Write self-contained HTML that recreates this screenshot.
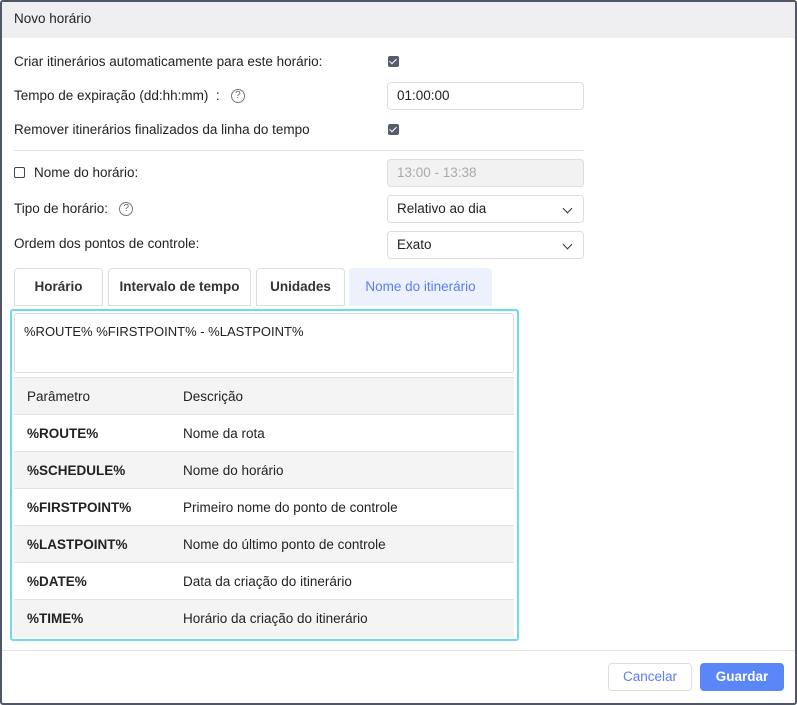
<!DOCTYPE html>
<html><head><meta charset="utf-8"><style>
*{box-sizing:border-box;margin:0;padding:0}
body{width:797px;height:705px;background:#fff;font-family:"Liberation Sans",sans-serif;font-size:13.5px;color:#222;position:relative;overflow:hidden}
.frame{position:absolute;left:0;top:0;width:797px;height:705px;border:2px solid #4f5666;border-radius:3px}
.hdr{position:absolute;left:2px;top:2px;width:793px;height:36px;background:#efeff1}
.a{position:absolute;white-space:nowrap}
.cb{position:absolute;width:11px;height:11px;background:#555c6b;border-radius:2px}
.cb::after{content:"";position:absolute;left:3px;top:1px;width:3px;height:6px;border:solid #fff;border-width:0 1.5px 1.5px 0;transform:rotate(45deg)}
.inp{position:absolute;left:387px;width:197px;height:28px;border:1px solid #ddd;border-radius:4px;padding:0 9px;line-height:26px}
.q{display:inline-block;width:14px;height:14px;border:1px solid #777;border-radius:50%;font-size:10px;line-height:12px;text-align:center;color:#666;vertical-align:middle}
.chev{position:absolute;right:12px;top:9px;width:7px;height:7px;border:solid #333;border-width:0 1.6px 1.6px 0;transform:rotate(45deg)}
.tab{position:absolute;top:268px;height:38px;border:1px solid #ddd;border-radius:4px 4px 0 0;text-align:center;line-height:36px;font-weight:bold;color:#333}
table{position:absolute;left:14px;top:377px;width:500px;border-collapse:collapse}
td{height:37px;border-top:1px solid #e2e2e2;padding-left:13px}
tr:nth-child(odd) td{background:#f4f4f4}
td:first-child{width:156px;font-weight:bold}
</style></head><body>
<div class="frame"></div>
<div class="hdr"></div>
<div class="a" style="left:14px;top:11px">Novo horário</div>
<div class="a" style="left:14px;top:54px">Criar itinerários automaticamente para este horário:</div>
<div class="cb" style="left:388px;top:56px"></div>
<div class="a" style="left:14px;top:88px">Tempo de expiração (dd:hh:mm) &nbsp;: &nbsp;&nbsp;<span class="q">?</span></div>
<div class="inp" style="top:82px">01:00:00</div>
<div class="a" style="left:14px;top:122px">Remover itinerários finalizados da linha do tempo</div>
<div class="cb" style="left:388px;top:124px"></div>
<div class="a" style="left:14px;top:150px;width:570px;height:1px;background:#e2e2e2"></div>
<div class="a" style="left:14px;top:167px;width:11px;height:11px;border:1.3px solid #444;border-radius:2px"></div>
<div class="a" style="left:34px;top:165px">Nome do horário:</div>
<div class="inp" style="top:159px;background:#f2f2f2;color:#aaa">13:00 - 13:38</div>
<div class="a" style="left:14px;top:201px">Tipo de horário: &nbsp;&nbsp;<span class="q">?</span></div>
<div class="inp" style="top:195px">Relativo ao dia<div class="chev"></div></div>
<div class="a" style="left:14px;top:236px">Ordem dos pontos de controle:</div>
<div class="inp" style="top:231px">Exato<div class="chev"></div></div>
<div class="tab" style="left:14px;width:89px">Horário</div>
<div class="tab" style="left:108px;width:143px">Intervalo de tempo</div>
<div class="tab" style="left:256px;width:89px">Unidades</div>
<div class="tab" style="left:349px;width:143px;background:#edf1fd;border-color:#edf1fd;color:#5b7cf5;font-weight:normal">Nome do itinerário</div>
<div class="a" style="left:10px;top:309px;width:509px;height:332px;border:2px solid #6fdbe9;border-radius:3px"></div>
<div class="a" style="left:14px;top:313px;width:500px;height:60px;border:1px solid #ddd;border-radius:3px;padding:10px 9px;font-size:13px">%ROUTE% %FIRSTPOINT% - %LASTPOINT%</div>
<table>
<tr><td style="font-weight:normal">Parâmetro</td><td>Descrição</td></tr>
<tr><td>%ROUTE%</td><td>Nome da rota</td></tr>
<tr><td>%SCHEDULE%</td><td>Nome do horário</td></tr>
<tr><td>%FIRSTPOINT%</td><td>Primeiro nome do ponto de controle</td></tr>
<tr><td>%LASTPOINT%</td><td>Nome do último ponto de controle</td></tr>
<tr><td>%DATE%</td><td>Data da criação do itinerário</td></tr>
<tr><td>%TIME%</td><td>Horário da criação do itinerário</td></tr>
</table>
<div class="a" style="left:2px;top:650px;width:793px;height:1px;background:#e2e2e2"></div>
<div class="a" style="left:608px;top:663px;width:84px;height:28px;border:1px solid #ddd;border-radius:4px;text-align:center;line-height:26px;color:#5b7cf5">Cancelar</div>
<div class="a" style="left:700px;top:663px;width:84px;height:28px;background:#5b86f7;border-radius:4px;text-align:center;line-height:28px;color:#fff;font-weight:bold">Guardar</div>
</body></html>
